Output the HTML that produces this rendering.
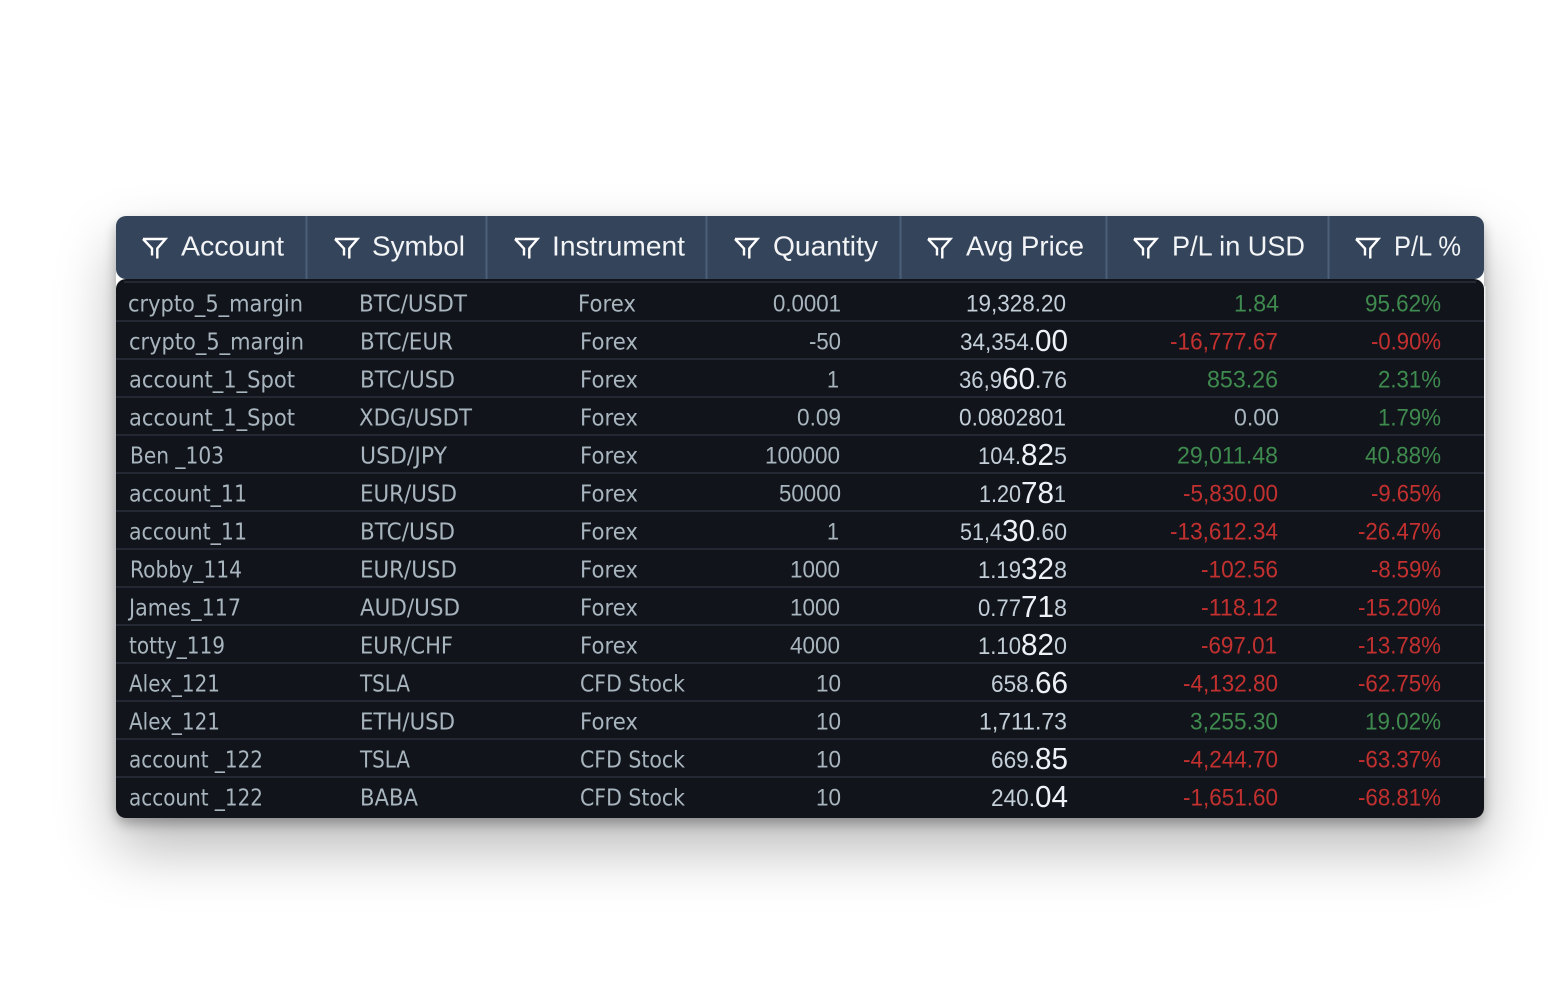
<!DOCTYPE html>
<html><head><meta charset="utf-8"><title>Positions</title>
<style>
html,body{margin:0;padding:0;width:1568px;height:1000px;background:#fff;overflow:hidden}
.sh{position:absolute;left:116px;top:216px;width:1368px;height:602px;border-radius:12px;box-shadow:0 30px 60px rgba(0,0,0,.28),0 6px 12px rgba(0,0,0,.28)}
.bd{position:absolute;left:116px;top:279px;width:1368px;height:539px;background:#11151b;border-radius:10px}
.hd{position:absolute;left:116px;top:216px;width:1368px;height:63px;background:#34445a;border-radius:10px}
svg{position:absolute;left:0;top:0}
text{font-family:"Liberation Sans",Arial,sans-serif;font-size:24px;fill:#a9b5be}
.tx text{font-family:"DejaVu Sans",sans-serif;font-size:23px}
.h text{font-size:28px;fill:#f2f4f6}
.av text{fill:#c3ced8}
.av .b{font-size:31px;fill:#eef2f6}
.g text{fill:#3f8a4e}
.r text{fill:#c2302f}
</style></head><body>
<div class="sh"></div><div class="bd"></div><div class="hd"></div>
<svg width="1568" height="1000" viewBox="0 0 1568 1000">
<rect x="1484" y="286" width="1.500" height="492" fill="#f1f1f1"/>
<g fill="#232833">
<rect x="124" y="281" width="1352" height="2"/><rect x="116" y="320" width="1368" height="2"/><rect x="116" y="358" width="1368" height="2"/><rect x="116" y="396" width="1368" height="2"/><rect x="116" y="434" width="1368" height="2"/><rect x="116" y="472" width="1368" height="2"/><rect x="116" y="510" width="1368" height="2"/><rect x="116" y="548" width="1368" height="2"/><rect x="116" y="586" width="1368" height="2"/><rect x="116" y="624" width="1368" height="2"/><rect x="116" y="662" width="1368" height="2"/><rect x="116" y="700" width="1368" height="2"/><rect x="116" y="738" width="1368" height="2"/><rect x="116" y="776" width="1368" height="2"/>
</g>
<g fill="#4c5f78">
<rect x="305.500" y="216" width="2" height="63"/><rect x="485.500" y="216" width="2" height="63"/><rect x="705.500" y="216" width="2" height="63"/><rect x="899.500" y="216" width="2" height="63"/><rect x="1105.500" y="216" width="2" height="63"/><rect x="1327.500" y="216" width="2" height="63"/>
</g>
<g fill="none" stroke="#fff" stroke-width="2.400">
<path d="M143 239H165.500L157.300 248.500V258.500M143 239L152 248.500V255.500"/>
<path d="M335 239H357.500L349.300 248.500V258.500M335 239L344 248.500V255.500"/>
<path d="M515 239H537.500L529.300 248.500V258.500M515 239L524 248.500V255.500"/>
<path d="M735 239H757.500L749.300 248.500V258.500M735 239L744 248.500V255.500"/>
<path d="M928 239H950.500L942.300 248.500V258.500M928 239L937 248.500V255.500"/>
<path d="M1134 239H1156.500L1148.300 248.500V258.500M1134 239L1143 248.500V255.500"/>
<path d="M1356 239H1378.500L1370.300 248.500V258.500M1356 239L1365 248.500V255.500"/>
</g>
<g class="h">
<text x="181" y="255.500" textLength="103" lengthAdjust="spacingAndGlyphs">Account</text>
<text x="372" y="255.500" textLength="93" lengthAdjust="spacingAndGlyphs">Symbol</text>
<text x="552" y="255.500" textLength="133" lengthAdjust="spacingAndGlyphs">Instrument</text>
<text x="773" y="255.500" textLength="105" lengthAdjust="spacingAndGlyphs">Quantity</text>
<text x="966" y="255.500" textLength="118" lengthAdjust="spacingAndGlyphs">Avg Price</text>
<text x="1172" y="255.500" textLength="133" lengthAdjust="spacingAndGlyphs">P/L in USD</text>
<text x="1394" y="255.500" textLength="67" lengthAdjust="spacingAndGlyphs">P/L %</text>
</g>
<g class="tx">
<text x="128" y="311.500" textLength="175" lengthAdjust="spacingAndGlyphs">crypto_5_margin</text>
<text x="129" y="349.500" textLength="175" lengthAdjust="spacingAndGlyphs">crypto_5_margin</text>
<text x="129" y="387.500" textLength="166" lengthAdjust="spacingAndGlyphs">account_1_Spot</text>
<text x="129" y="425.500" textLength="166" lengthAdjust="spacingAndGlyphs">account_1_Spot</text>
<text x="130" y="463.500" textLength="94" lengthAdjust="spacingAndGlyphs">Ben _103</text>
<text x="129" y="501.500" textLength="118" lengthAdjust="spacingAndGlyphs">account_11</text>
<text x="129" y="539.500" textLength="118" lengthAdjust="spacingAndGlyphs">account_11</text>
<text x="130" y="577.500" textLength="112" lengthAdjust="spacingAndGlyphs">Robby_114</text>
<text x="129" y="615.500" textLength="112" lengthAdjust="spacingAndGlyphs">James_117</text>
<text x="129" y="653.500" textLength="96" lengthAdjust="spacingAndGlyphs">totty_119</text>
<text x="129" y="691.500" textLength="91" lengthAdjust="spacingAndGlyphs">Alex_121</text>
<text x="129" y="729.500" textLength="91" lengthAdjust="spacingAndGlyphs">Alex_121</text>
<text x="129" y="767.500" textLength="134" lengthAdjust="spacingAndGlyphs">account _122</text>
<text x="129" y="805.500" textLength="134" lengthAdjust="spacingAndGlyphs">account _122</text>

<text x="359" y="311.500" textLength="108" lengthAdjust="spacingAndGlyphs">BTC/USDT</text>
<text x="360" y="349.500" textLength="93" lengthAdjust="spacingAndGlyphs">BTC/EUR</text>
<text x="360" y="387.500" textLength="95" lengthAdjust="spacingAndGlyphs">BTC/USD</text>
<text x="359" y="425.500" textLength="113" lengthAdjust="spacingAndGlyphs">XDG/USDT</text>
<text x="360" y="463.500" textLength="87" lengthAdjust="spacingAndGlyphs">USD/JPY</text>
<text x="360" y="501.500" textLength="97" lengthAdjust="spacingAndGlyphs">EUR/USD</text>
<text x="360" y="539.500" textLength="95" lengthAdjust="spacingAndGlyphs">BTC/USD</text>
<text x="360" y="577.500" textLength="97" lengthAdjust="spacingAndGlyphs">EUR/USD</text>
<text x="360" y="615.500" textLength="100" lengthAdjust="spacingAndGlyphs">AUD/USD</text>
<text x="360" y="653.500" textLength="93" lengthAdjust="spacingAndGlyphs">EUR/CHF</text>
<text x="360" y="691.500" textLength="50" lengthAdjust="spacingAndGlyphs">TSLA</text>
<text x="360" y="729.500" textLength="95" lengthAdjust="spacingAndGlyphs">ETH/USD</text>
<text x="360" y="767.500" textLength="50" lengthAdjust="spacingAndGlyphs">TSLA</text>
<text x="360" y="805.500" textLength="58" lengthAdjust="spacingAndGlyphs">BABA</text>

<text x="578" y="311.500" textLength="58" lengthAdjust="spacingAndGlyphs">Forex</text>
<text x="580" y="349.500" textLength="58" lengthAdjust="spacingAndGlyphs">Forex</text>
<text x="580" y="387.500" textLength="58" lengthAdjust="spacingAndGlyphs">Forex</text>
<text x="580" y="425.500" textLength="58" lengthAdjust="spacingAndGlyphs">Forex</text>
<text x="580" y="463.500" textLength="58" lengthAdjust="spacingAndGlyphs">Forex</text>
<text x="580" y="501.500" textLength="58" lengthAdjust="spacingAndGlyphs">Forex</text>
<text x="580" y="539.500" textLength="58" lengthAdjust="spacingAndGlyphs">Forex</text>
<text x="580" y="577.500" textLength="58" lengthAdjust="spacingAndGlyphs">Forex</text>
<text x="580" y="615.500" textLength="58" lengthAdjust="spacingAndGlyphs">Forex</text>
<text x="580" y="653.500" textLength="58" lengthAdjust="spacingAndGlyphs">Forex</text>
<text x="580" y="691.500" textLength="105" lengthAdjust="spacingAndGlyphs">CFD Stock</text>
<text x="580" y="729.500" textLength="58" lengthAdjust="spacingAndGlyphs">Forex</text>
<text x="580" y="767.500" textLength="105" lengthAdjust="spacingAndGlyphs">CFD Stock</text>
<text x="580" y="805.500" textLength="105" lengthAdjust="spacingAndGlyphs">CFD Stock</text>
</g>
<g>
<text x="773" y="311.500" textLength="68" lengthAdjust="spacingAndGlyphs">0.0001</text>
<text x="809" y="349.500" textLength="32" lengthAdjust="spacingAndGlyphs">-50</text>
<text x="827" y="387.500" textLength="12" lengthAdjust="spacingAndGlyphs">1</text>
<text x="797" y="425.500" textLength="44" lengthAdjust="spacingAndGlyphs">0.09</text>
<text x="765" y="463.500" textLength="75" lengthAdjust="spacingAndGlyphs">100000</text>
<text x="779" y="501.500" textLength="62" lengthAdjust="spacingAndGlyphs">50000</text>
<text x="827" y="539.500" textLength="12" lengthAdjust="spacingAndGlyphs">1</text>
<text x="790" y="577.500" textLength="50" lengthAdjust="spacingAndGlyphs">1000</text>
<text x="790" y="615.500" textLength="50" lengthAdjust="spacingAndGlyphs">1000</text>
<text x="790" y="653.500" textLength="50" lengthAdjust="spacingAndGlyphs">4000</text>
<text x="816" y="691.500" textLength="25" lengthAdjust="spacingAndGlyphs">10</text>
<text x="816" y="729.500" textLength="25" lengthAdjust="spacingAndGlyphs">10</text>
<text x="816" y="767.500" textLength="25" lengthAdjust="spacingAndGlyphs">10</text>
<text x="816" y="805.500" textLength="25" lengthAdjust="spacingAndGlyphs">10</text>
</g>
<g class="av">
<text x="966" y="311.500" textLength="100" lengthAdjust="spacingAndGlyphs">19,328.20</text>
<text x="960" y="350" textLength="75" lengthAdjust="spacingAndGlyphs">34,354.</text><text class="b" x="1035" y="351" textLength="33" lengthAdjust="spacingAndGlyphs">00</text>
<text x="959" y="388" textLength="43" lengthAdjust="spacingAndGlyphs">36,9</text><text class="b" x="1002" y="389" textLength="33" lengthAdjust="spacingAndGlyphs">60</text><text x="1035" y="388" textLength="32" lengthAdjust="spacingAndGlyphs">.76</text>
<text x="959" y="425.500" textLength="107" lengthAdjust="spacingAndGlyphs">0.0802801</text>
<text x="978" y="464" textLength="43" lengthAdjust="spacingAndGlyphs">104.</text><text class="b" x="1021" y="465" textLength="33" lengthAdjust="spacingAndGlyphs">82</text><text x="1054" y="464" textLength="13" lengthAdjust="spacingAndGlyphs">5</text>
<text x="979" y="502" textLength="42" lengthAdjust="spacingAndGlyphs">1.20</text><text class="b" x="1021" y="503" textLength="33" lengthAdjust="spacingAndGlyphs">78</text><text x="1054" y="502" textLength="12" lengthAdjust="spacingAndGlyphs">1</text>
<text x="960" y="540" textLength="42" lengthAdjust="spacingAndGlyphs">51,4</text><text class="b" x="1002" y="541" textLength="33" lengthAdjust="spacingAndGlyphs">30</text><text x="1035" y="540" textLength="32" lengthAdjust="spacingAndGlyphs">.60</text>
<text x="978" y="578" textLength="43" lengthAdjust="spacingAndGlyphs">1.19</text><text class="b" x="1021" y="579" textLength="33" lengthAdjust="spacingAndGlyphs">32</text><text x="1054" y="578" textLength="13" lengthAdjust="spacingAndGlyphs">8</text>
<text x="978" y="616" textLength="43" lengthAdjust="spacingAndGlyphs">0.77</text><text class="b" x="1021" y="617" textLength="33" lengthAdjust="spacingAndGlyphs">71</text><text x="1054" y="616" textLength="13" lengthAdjust="spacingAndGlyphs">8</text>
<text x="978" y="654" textLength="43" lengthAdjust="spacingAndGlyphs">1.10</text><text class="b" x="1021" y="655" textLength="33" lengthAdjust="spacingAndGlyphs">82</text><text x="1054" y="654" textLength="13" lengthAdjust="spacingAndGlyphs">0</text>
<text x="991" y="692" textLength="44" lengthAdjust="spacingAndGlyphs">658.</text><text class="b" x="1035" y="693" textLength="33" lengthAdjust="spacingAndGlyphs">66</text>
<text x="979" y="729.500" textLength="88" lengthAdjust="spacingAndGlyphs">1,711.73</text>
<text x="991" y="768" textLength="44" lengthAdjust="spacingAndGlyphs">669.</text><text class="b" x="1035" y="769" textLength="33" lengthAdjust="spacingAndGlyphs">85</text>
<text x="991" y="806" textLength="44" lengthAdjust="spacingAndGlyphs">240.</text><text class="b" x="1035" y="807" textLength="33" lengthAdjust="spacingAndGlyphs">04</text>
</g>
<g class="g">
<text x="1234" y="311.500" textLength="45" lengthAdjust="spacingAndGlyphs">1.84</text>
<text x="1365" y="311.500" textLength="76" lengthAdjust="spacingAndGlyphs">95.62%</text>
<text x="1207" y="387.500" textLength="71" lengthAdjust="spacingAndGlyphs">853.26</text>
<text x="1378" y="387.500" textLength="63" lengthAdjust="spacingAndGlyphs">2.31%</text>
<text x="1378" y="425.500" textLength="63" lengthAdjust="spacingAndGlyphs">1.79%</text>
<text x="1177" y="463.500" textLength="101" lengthAdjust="spacingAndGlyphs">29,011.48</text>
<text x="1365" y="463.500" textLength="76" lengthAdjust="spacingAndGlyphs">40.88%</text>
<text x="1190" y="729.500" textLength="88" lengthAdjust="spacingAndGlyphs">3,255.30</text>
<text x="1365" y="729.500" textLength="76" lengthAdjust="spacingAndGlyphs">19.02%</text>
</g>
<text x="1234" y="425.500" textLength="45" lengthAdjust="spacingAndGlyphs">0.00</text>
<g class="r">
<text x="1170" y="349.500" textLength="108" lengthAdjust="spacingAndGlyphs">-16,777.67</text>
<text x="1371" y="349.500" textLength="70" lengthAdjust="spacingAndGlyphs">-0.90%</text>
<text x="1183" y="501.500" textLength="95" lengthAdjust="spacingAndGlyphs">-5,830.00</text>
<text x="1371" y="501.500" textLength="70" lengthAdjust="spacingAndGlyphs">-9.65%</text>
<text x="1170" y="539.500" textLength="108" lengthAdjust="spacingAndGlyphs">-13,612.34</text>
<text x="1358" y="539.500" textLength="83" lengthAdjust="spacingAndGlyphs">-26.47%</text>
<text x="1201" y="577.500" textLength="77" lengthAdjust="spacingAndGlyphs">-102.56</text>
<text x="1371" y="577.500" textLength="70" lengthAdjust="spacingAndGlyphs">-8.59%</text>
<text x="1201" y="615.500" textLength="77" lengthAdjust="spacingAndGlyphs">-118.12</text>
<text x="1358" y="615.500" textLength="83" lengthAdjust="spacingAndGlyphs">-15.20%</text>
<text x="1201" y="653.500" textLength="76" lengthAdjust="spacingAndGlyphs">-697.01</text>
<text x="1358" y="653.500" textLength="83" lengthAdjust="spacingAndGlyphs">-13.78%</text>
<text x="1183" y="691.500" textLength="95" lengthAdjust="spacingAndGlyphs">-4,132.80</text>
<text x="1358" y="691.500" textLength="83" lengthAdjust="spacingAndGlyphs">-62.75%</text>
<text x="1183" y="767.500" textLength="95" lengthAdjust="spacingAndGlyphs">-4,244.70</text>
<text x="1358" y="767.500" textLength="83" lengthAdjust="spacingAndGlyphs">-63.37%</text>
<text x="1183" y="805.500" textLength="95" lengthAdjust="spacingAndGlyphs">-1,651.60</text>
<text x="1358" y="805.500" textLength="83" lengthAdjust="spacingAndGlyphs">-68.81%</text>
</g>
</svg>
</body></html>
